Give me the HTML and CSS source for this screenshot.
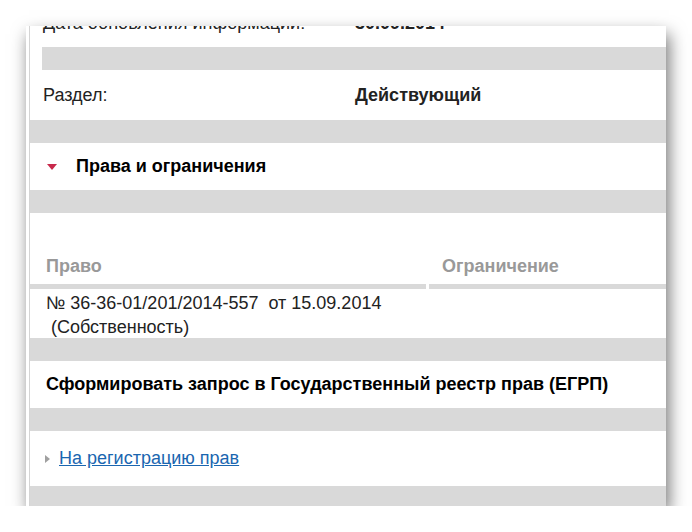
FILE: index.html
```html
<!DOCTYPE html>
<html lang="ru">
<head>
<meta charset="utf-8">
<link rel="stylesheet" href="styles.css">
</head>
<body>
<div class="window">
  <div class="inner">
    <div class="top-section">
      <div class="kv clip-row">
        <span class="label clipped">Дата обновления информации:</span>
        <span class="value clipped">30.09.2014</span>
      </div>
      <div class="band"></div>
    </div>
    <div class="kv row-razdel">
      <span class="label">Раздел:</span>
      <span class="value">Действующий</span>
    </div>
    <div class="band"></div>
    <div class="section-title">
      <span class="tri-down"></span>
      <span class="title">Права и ограничения</span>
    </div>
    <div class="band"></div>
    <div class="table">
      <div class="th th-left">Право</div>
      <div class="th th-right">Ограничение</div>
      <div class="td">№ 36-36-01/201/2014-557&nbsp; от 15.09.2014<br>&nbsp;(Собственность)</div>
      <div class="td"></div>
    </div>
    <div class="band"></div>
    <div class="request">Сформировать запрос в Государственный реестр прав (ЕГРП)</div>
    <div class="band"></div>
    <div class="link-row">
      <span class="tri-right"></span>
      <a class="link" href="#">На регистрацию прав</a>
    </div>
    <div class="band band-last"></div>
  </div>
</div>
</body>
</html>
```

FILE: styles.css
```css
html, body {
  margin: 0;
  padding: 0;
  background: #ffffff;
}
body {
  font-family: "Liberation Sans", Arial, sans-serif;
  font-size: 18px;
  color: #222222;
}
.window {
  margin: 26px 0 0 26px;
  width: 640px;
  height: 480px;
  background: #ffffff;
  box-shadow: 3px 8px 16px rgba(0, 0, 0, 0.55);
  padding-left: 3px;
  box-sizing: border-box;
  overflow: hidden;
}
.inner {
  border-left: 1px solid #d4d4d4;
  height: 100%;
  display: flex;
  flex-direction: column;
}
.band {
  height: 23px;
  background: #d9d9d9;
  flex: none;
}
.top-section {
  padding-left: 12px;
}
.kv {
  display: grid;
  grid-template-columns: 312px 1fr;
  align-items: center;
}
.clip-row {
  height: 21px;
  align-items: start;
  overflow: hidden;
  padding-left: 1px;
}
.clipped {
  display: block;
  line-height: 18px;
  margin-top: -12px;
}
.row-razdel {
  height: 50px;
  padding-left: 13px;
}
.label {
  color: #222222;
}
.value {
  font-weight: bold;
  color: #222222;
}
.section-title {
  height: 47px;
  display: flex;
  align-items: center;
  padding-left: 17px;
}
.tri-down {
  width: 0;
  height: 0;
  border-left: 5px solid transparent;
  border-right: 5px solid transparent;
  border-top: 6px solid #c8294b;
  margin-right: 19px;
  margin-top: 1px;
}
.title {
  font-weight: bold;
  color: #000000;
}
.table {
  display: grid;
  grid-template-columns: 396px 1fr;
  column-gap: 3px;
  height: 125px;
  grid-template-rows: 76px 49px;
}
.th {
  display: flex;
  align-items: flex-end;
  font-weight: bold;
  color: #999999;
  padding-bottom: 8px;
  border-bottom: 5px solid #d9d9d9;
  box-sizing: border-box;
  line-height: 20px;
}
.th-left {
  padding-left: 16px;
}
.th-right {
  padding-left: 13px;
}
.td {
  padding: 2px 0 0 16px;
  line-height: 24px;
  color: #222222;
}
.request {
  height: 47px;
  display: flex;
  align-items: center;
  padding-left: 16px;
  font-weight: bold;
  color: #000000;
}
.link-row {
  height: 55px;
  display: flex;
  align-items: center;
  padding-left: 15px;
}
.tri-right {
  width: 0;
  height: 0;
  border-top: 4px solid transparent;
  border-bottom: 4px solid transparent;
  border-left: 5px solid #a0a0a0;
  margin-right: 9px;
}
.link {
  color: #1a66b0;
  text-decoration: underline;
}
.band-last {
  flex: 1;
}
```
